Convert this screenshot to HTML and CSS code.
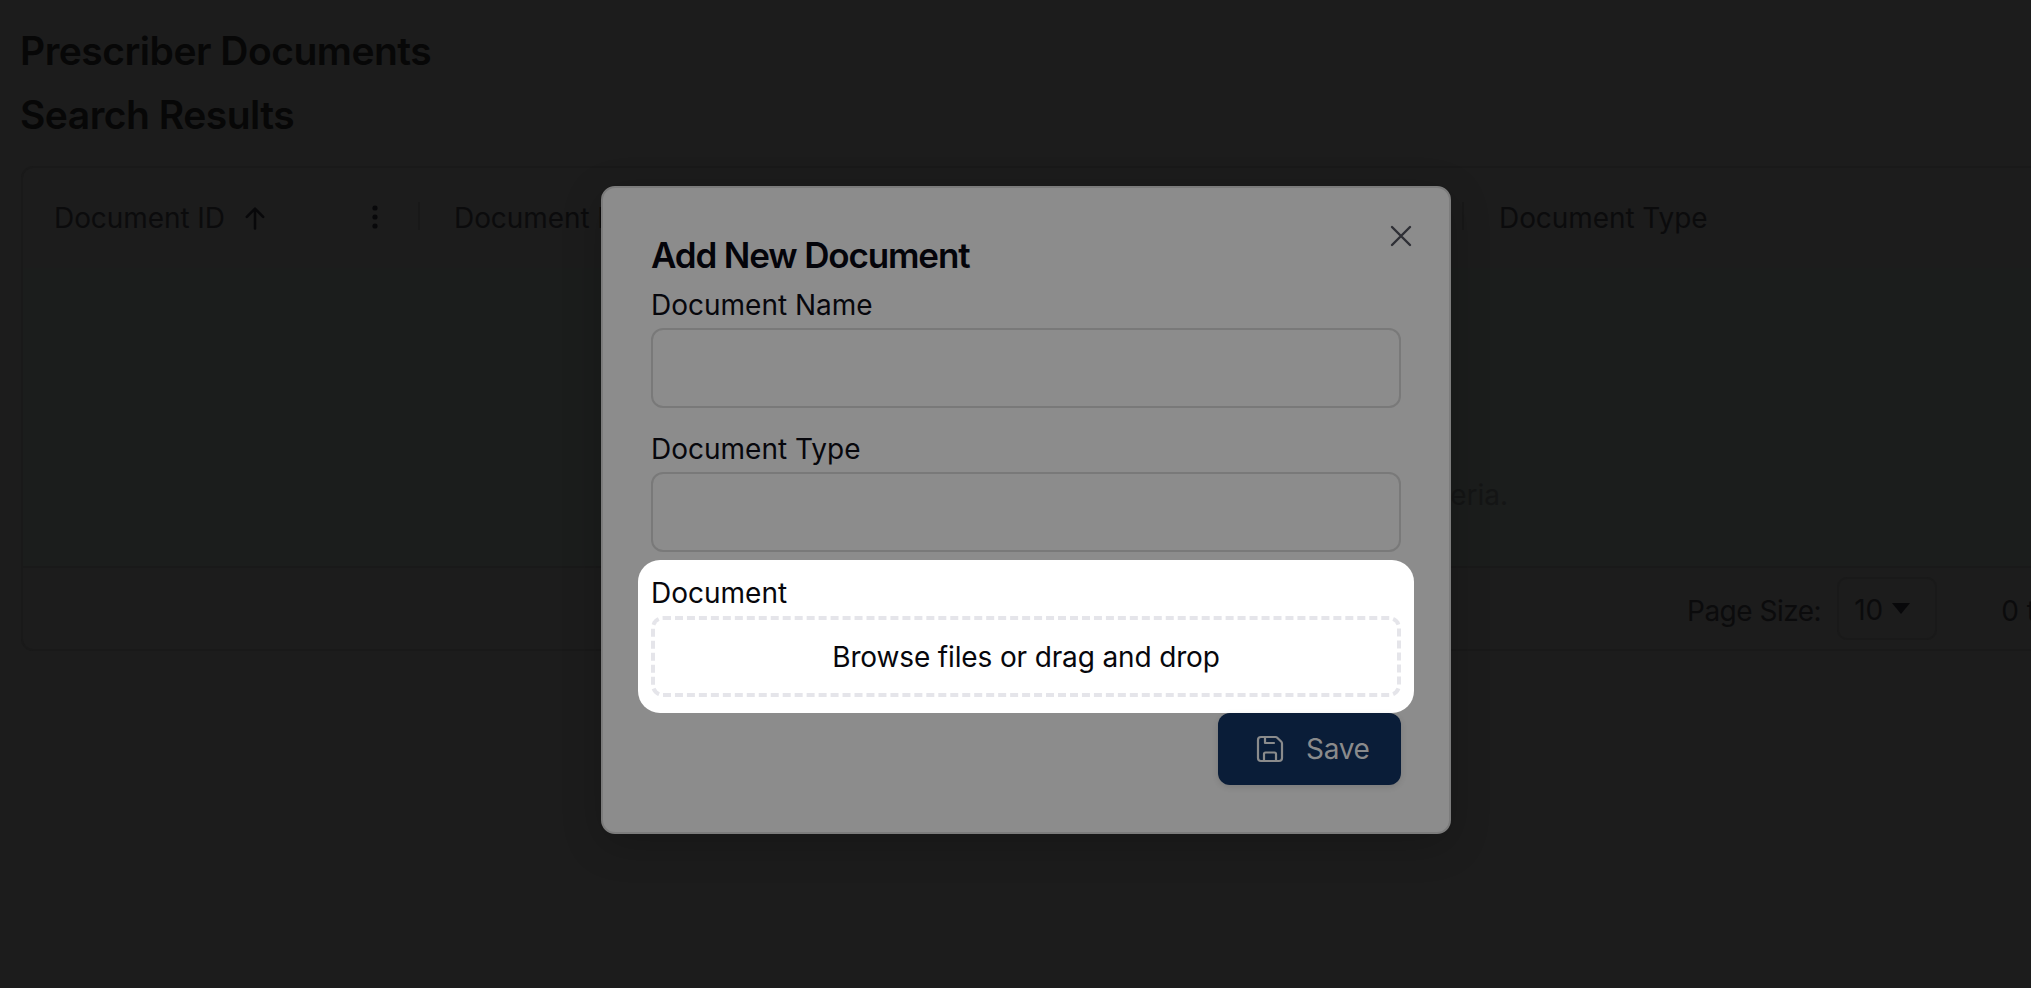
FILE: index.html
```html
<!DOCTYPE html>
<html lang="en">
<head>
<meta charset="utf-8">
<title>Prescriber Documents</title>
<link rel="stylesheet" href="styles.css">
</head>
<body>
<main class="page">
  <h1 class="page-title">Prescriber Documents</h1>
  <h2 class="page-title">Search Results</h2>
  <section class="card">
    <div class="grid-head">
      <div class="col col-id">
        <span>Document ID</span>
        <svg class="sort" viewBox="0 0 24 24" width="28" height="28"><path d="M12 21V4M5 11l7-7 7 7" fill="none" stroke="currentColor" stroke-width="2.2" stroke-linecap="round" stroke-linejoin="round"/></svg>
        <svg class="kebab" viewBox="0 0 8 28" width="8" height="28"><circle cx="4" cy="5" r="2.6"/><circle cx="4" cy="14" r="2.6"/><circle cx="4" cy="23" r="2.6"/></svg>
        <i class="sep"></i>
      </div>
      <div class="col col-name"><span>Document Name</span><i class="sep"></i></div>
      <div class="col col-date"><span>Date Added</span><i class="sep"></i></div>
      <div class="col col-type"><span>Document Type</span></div>
    </div>
    <div class="grid-body"><p class="empty">No documents were found that match your search criteria.</p></div>
    <div class="grid-foot">
      <span class="size-label">Page Size:</span>
      <div class="size-select"><span>10</span><b class="caret"></b></div>
      <span class="range">0 to 0 of 0</span>
    </div>
  </section>
</main>

<div class="modal" role="dialog" aria-label="Add New Document">
  <button class="close" aria-label="Close">
    <svg viewBox="0 0 24 24" width="24" height="24"><path d="M3 3l18 18M21 3L3 21" fill="none" stroke="currentColor" stroke-width="2.4" stroke-linecap="round"/></svg>
  </button>
  <h3 class="modal-title">Add New Document</h3>
  <label class="field-label">Document Name</label>
  <div class="input"></div>
  <label class="field-label">Document Type</label>
  <div class="input"></div>
  <div class="highlight">
    <label class="field-label">Document</label>
    <div class="drop">Browse files or drag and drop</div>
  </div>
  <div class="actions">
    <button class="save">
      <svg viewBox="0 0 28 28" width="28" height="28" fill="none" stroke="currentColor" stroke-width="2.2" stroke-linejoin="round" stroke-linecap="round"><path d="M5 2h14.500a3 3 0 0 1 2 .9l3.600 3.600a3 3 0 0 1 .9 2V23a3 3 0 0 1-3 3H5a3 3 0 0 1-3-3V5a3 3 0 0 1 3-3z"/><path d="M9 2v6h9M8 26v-7a1.500 1.500 0 0 1 1.500-1.500h9A1.500 1.500 0 0 1 20 19v7"/></svg>
      <span>Save</span>
    </button>
  </div>
</div>
</body>
</html>
```
FILE: styles.css
```css
* { box-sizing: border-box; }
html, body { margin: 0; height: 100%; }
body {
  background: #1c1c1c;
  overflow: hidden;
  font-family: Inter, "Liberation Sans", sans-serif;
  color: #0b0b0c;
  width: 2031px;
  height: 988px;
  position: relative;
}
.page { padding: 26px 0 0 20px; width: 2300px; }
.page-title {
  margin: 0 0 15px;
  font-size: 39px;
  line-height: 49px;
  font-weight: 600;
  letter-spacing: -0.5px;
  color: #070707;
}
.card {
  margin-top: 27px;
  margin-left: 1px;
  width: 2260px;
  height: 485px;
  border: 2px solid #191919;
  border-radius: 12px;
  font-size: 28px;
  display: flex;
  flex-direction: column;
}
.grid-head { display: flex; height: 100px; flex: none; letter-spacing: -0.08px; }
.col {
  position: relative;
  display: flex;
  align-items: center;
  padding-left: 31px;
  height: 100%;
  color: #0b0b0c;
}
.col-id { width: 397px; }
.col-name { width: 522px; padding-left: 34px; }
.col-date { width: 522px; }
.col-type { width: 500px; padding-left: 35px; }
.sort { margin-left: 16px; color: #08080a; }
.kebab { position: absolute; right: 41px; top: 35px; fill: #08080a; }
.sep {
  position: absolute;
  right: 0;
  top: 34px;
  width: 2px;
  height: 28px;
  background: #181818;
}
.grid-body {
  flex: 1;
  background: #1b1d1c;
  display: flex;
  align-items: flex-end;
  padding-bottom: 53px;
}
.empty {
  margin: 0;
  width: 1485px;
  text-align: right;
  color: #141515;
  line-height: 36px;
  white-space: nowrap;
}
.grid-foot {
  flex: none;
  height: 83px;
  border-top: 2px solid #191919;
  display: flex;
  align-items: center;
  padding-left: 1664px;
  font-size: 28px;
}
.size-label { letter-spacing: -0.5px; padding-top: 5px; }
.size-select {
  margin-left: 16px;
  width: 100px;
  height: 63px;
  border: 2px solid #191919;
  border-radius: 10px;
  display: flex;
  align-items: center;
  padding: 3px 0 0 15px;
  gap: 9px;
}
.caret {
  width: 0;
  height: 0;
  border-left: 9px solid transparent;
  border-right: 9px solid transparent;
  border-top: 11px solid #08080a;
  margin-top: -3px;
}
.range { margin-left: 64px; padding-top: 5px; white-space: nowrap; }

.modal {
  position: absolute;
  left: 601px;
  top: 186px;
  width: 850px;
  height: 648px;
  padding: 48px 48px 0;
  background: #8c8c8c;
  border: 2px solid #7c7c7c;
  border-radius: 14px;
  box-shadow: 0 10px 40px rgba(0, 0, 0, 0.2);
}
.close {
  position: absolute;
  top: 36px;
  right: 36px;
  width: 24px;
  height: 24px;
  padding: 0;
  border: 0;
  background: none;
  color: #2e2f35;
}
.close svg { display: block; }
.modal-title {
  margin: 0 0 14px;
  font-size: 35px;
  line-height: 38px;
  font-weight: 600;
  letter-spacing: -1.15px;
  color: #04040a;
}
.field-label {
  display: block;
  height: 32px;
  margin-bottom: 8px;
  font-size: 28px;
  line-height: 34px;
  color: #07070c;
}
.input {
  height: 80px;
  margin-bottom: 24px;
  border: 2px solid #797979;
  border-radius: 12px;
}
.input + .highlight { margin-top: -16px; }
.highlight {
  margin: 0 -13px;
  padding: 16px 13px;
  background: #fff;
  border-radius: 22px;
}
.drop {
  height: 81px;
  border: 4px dashed #e5e5ea;
  border-radius: 12px;
  display: flex;
  align-items: center;
  justify-content: center;
  font-size: 28px;
  letter-spacing: -0.14px;
  color: #07070c;
}
.actions { display: flex; justify-content: flex-end; }
.save {
  display: flex;
  align-items: center;
  gap: 22px;
  width: 183px;
  height: 72px;
  padding: 0 0 0 38px;
  border: 0;
  border-radius: 12px;
  background: #0a1d38;
  color: #8a8b8c;
  font: 28px Inter, "Liberation Sans", sans-serif;
  letter-spacing: -0.3px;
  box-shadow: 0 2px 6px rgba(0, 0, 0, 0.12);
}
```
